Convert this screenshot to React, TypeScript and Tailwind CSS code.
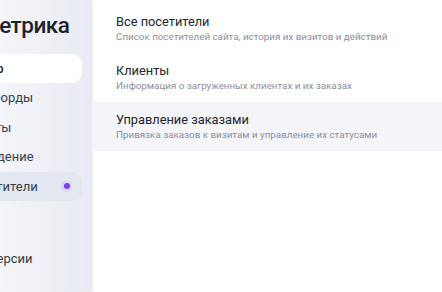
import React from 'react';

const navItems = [
  { label: 'Обзор', active: true },
  { label: 'Дашборды' },
  { label: 'Отчёты' },
  { label: 'Поведение' },
  { label: 'Посетители', selected: true, dot: true },
];

const sections = [
  { title: 'Все посетители', text: 'Список посетителей сайта, история их визитов и действий' },
  { title: 'Клиенты', text: 'Информация о загруженных клиентах и их заказах' },
  { title: 'Управление заказами', text: 'Привязка заказов к визитам и управление их статусами', hover: true },
];

export default function App() {
  return (
    <div className="flex w-[442px] h-[292px] overflow-hidden bg-white font-['Roboto',sans-serif]">
      {/* Sidebar, scrolled so the left part is cut off */}
      <aside className="w-[92px] shrink-0 overflow-hidden bg-gradient-to-r from-[#f4f5f9] to-[#e8ebf2] shadow-[1px_0_3px_rgba(30,40,70,0.08)]">
        <div className="-ml-[40px] w-[132px] pr-[10px]">
          <div className="pl-[20px] pt-[8px] h-[46px] text-[22.5px] font-medium leading-[34px] tracking-[-0.5px] text-[#1f2229] whitespace-nowrap">
            Метрика
          </div>
          <nav className="mt-[8px] flex flex-col gap-[1px]">
            {navItems.map((item) => (
              <div
                key={item.label}
                className={`flex h-[28.5px] items-center rounded-[10px] pl-[6px] pr-[10px] text-[13px] ${
                  item.active
                    ? 'bg-white font-medium text-[#1f2229]'
                    : item.selected
                    ? 'bg-[#e3e7f0] text-[#3a3e48]'
                    : 'text-[#3a3e48]'
                }`}
              >
                <span className="flex-1 whitespace-nowrap">{item.label}</span>
                {item.dot && (
                  <span className="flex h-[11px] w-[11px] items-center justify-center rounded-full bg-[#dcd5fa]">
                    <span className="h-[6px] w-[6px] rounded-full bg-[#7b3ff2]" />
                  </span>
                )}
              </div>
            ))}
            <div className="h-[42px]" />
            <div className="flex h-[28px] items-center pl-[6px] text-[13px] text-[#3a3e48] whitespace-nowrap">
              Конверсии
            </div>
          </nav>
        </div>
      </aside>

      {/* Main list */}
      <main className="flex-1 pt-[4px]">
        {sections.map((s) => (
          <div
            key={s.title}
            className={`flex h-[49px] flex-col justify-center pl-[24px] ${s.hover ? 'bg-[#f3f5f9]' : ''}`}
          >
            <div className="text-[12.8px] leading-[16px] text-[#23262d]">{s.title}</div>
            <div className="text-[9.8px] leading-[14px] text-[#8b909b]">{s.text}</div>
          </div>
        ))}
      </main>
    </div>
  );
}
